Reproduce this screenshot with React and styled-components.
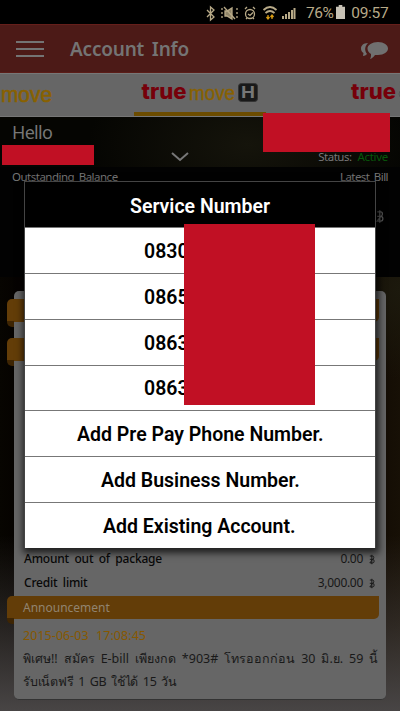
import React from 'react';
import styled, { createGlobalStyle } from 'styled-components';

const Global = createGlobalStyle`
  * { box-sizing: border-box; }
  body { margin: 0; background: #050403; }
`;
const Screen = styled.div`
  position: relative;
  width: 400px;
  height: 711px;
  overflow: hidden;
  display: flex;
  flex-direction: column;
  font-family: 'Noto Sans', 'Open Sans', sans-serif;
  background:
    linear-gradient(to bottom, transparent 535px, rgba(76,71,70,.45) 625px, #484545 711px),
    radial-gradient(ellipse 70px 90px at 400px 290px, #1c190d, transparent),
    linear-gradient(to right, #070501 0, #050200 18px, #130c04 380px, #171006 400px);
`;
const Label = styled.span`
  display: block;
  white-space: nowrap;
  font-family: ${p => p.$font || "'Noto Sans', 'Open Sans', sans-serif"};
  font-size: ${p => p.$size || 12}px;
  line-height: ${p => p.$line || 16}px;
  font-weight: ${p => p.$weight || 400};
  color: ${p => p.$color || '#777'};
  letter-spacing: ${p => p.$track || 0}px;
  word-spacing: ${p => p.$words || 0}px;
`;
const StatusBar = styled.div`
  height: 24px;
  flex: none;
  background: #000;
  display: flex;
  align-items: center;
  padding: 2px 0 0 204px;
`;
const StatusIcons = styled.svg`
  display: block;
  width: 102px;
  height: 22px;
  margin-top: -2px;
`;
const BatteryIcon = styled.svg`
  width: 9px;
  height: 14px;
  margin: -2px 6px 0 3px;
`;
const Header = styled.header`
  height: 49px;
  flex: none;
  display: flex;
  align-items: center;
  background: #4c1a17;
  border-top: 1px solid #651f1b;
  border-bottom: 1px solid #5b1d18;
  padding: 0 11px 0 16px;
`;
const Menu = styled.div`
  width: 28px;
  height: 16px;
  display: flex;
  flex-direction: column;
  justify-content: space-between;
  margin-right: 26px;
`;
const MenuLine = styled.div`
  height: 2px;
  background: #747474;
`;
const ChatIcon = styled.svg`
  width: 29px;
  height: 20px;
  margin: 5px 0 0 auto;
`;
const Tabs = styled.nav`
  height: 44px;
  flex: none;
  display: grid;
  grid-template-columns: 134px 132px 134px;
  background: #666;
  border-top: 1px solid #777;
  border-bottom: 1px solid #777;
`;
const Tab = styled.div`
  display: flex;
  align-items: center;
  justify-content: ${p => p.$end ? 'flex-end' : 'flex-start'};
  overflow: hidden;
  padding-left: ${p => p.$pad || 0}px;
  border-bottom: 4px solid ${p => p.$active ? '#6c4c00' : 'transparent'};
`;
const Brand = styled.svg`
  display: block;
  width: ${p => p.$w}px;
  height: 30px;
  flex: none;
`;
const Profile = styled.section`
  height: 50px;
  flex: none;
  display: flex;
  justify-content: space-between;
  padding: 4px 12px 0;
  background: radial-gradient(ellipse 160px 90px at 62% 55%, #15140b, #050502);
`;
const Balance = styled.section`
  height: 110px;
  flex: none;
  padding: 2px 12px 0;
  background: #020202;
`;
const SplitRow = styled.div`
  display: flex;
  justify-content: space-between;
  align-items: flex-start;
`;
const Amount = styled.div`
  display: flex;
  justify-content: flex-end;
  padding: 25px 4px 0 0;
`;
const StatusLine = styled.div`
  display: flex;
  gap: 6px;
  padding-top: 28px;
`;
const Card = styled.main`
  width: 372px;
  height: 409px;
  margin: 14px 0 0 14px;
  flex: none;
  display: flex;
  flex-direction: column;
  background: #666;
  border-radius: 5px;
  border-bottom: 1px solid #333;
`;
const Ribbon = styled.div`
  position: relative;
  flex: none;
  height: 23px;
  width: 372px;
  margin: ${p => p.$top}px 0 0 -7px;
  padding-left: 16px;
  background: #633d08;
  border-radius: 5px 0 5px 0;
  &::after {
    content: '';
    position: absolute;
    left: 0;
    top: 22px;
    width: 7px;
    height: 6px;
    background: #3e2503;
    border-radius: 0 0 0 5px;
  }
`;
const Usage = styled.div`
  height: 235px;
  flex: none;
  display: flex;
  flex-direction: column;
  justify-content: flex-end;
  padding: 0 11px 5px 10px;
  gap: 8px;
`;
const Notice = styled.div`
  padding: 6px 10px 0 9px;
`;
const Dialog = styled.div`
  position: absolute;
  left: 24px;
  top: 181px;
  width: 352px;
  height: 367px;
  display: grid;
  grid-template-rows: 45px repeat(7, 1fr);
  background: #fff;
  border: 1px solid #444;
  border-bottom: 0;
  box-shadow: 1px 3px 7px 2px rgba(0,0,0,.7);
`;
const DialogTitle = styled.div`
  display: flex;
  align-items: center;
  justify-content: center;
  background: #000;
  padding-top: 5px;
`;
const Option = styled.div`
  display: flex;
  align-items: center;
  padding: 3px 0 0 ${p => p.$left}px;
  border-top: 1px solid #777;
`;
const Redaction = styled.div`
  position: absolute;
  left: ${p => p.$x}px;
  top: ${p => p.$y}px;
  width: ${p => p.$w}px;
  height: ${p => p.$h}px;
  background: #c11024;
`;
const Chevron = styled.svg`
  width: 18px;
  height: 10px;
  margin: 31px 0 0 auto;
`;
const Greeting = styled.div`
  display: flex;
  width: 177px;
`;
const Value = styled.div`
  display: flex;
  align-items: center;
  gap: 6px;
`;
const BahtIcon = styled.svg`
  display: block;
  width: ${p => p.$w}px;
  height: ${p => p.$h}px;
`;
const Baht = ({ color = '#171717', w = 6, h = 11 }) => (
  <BahtIcon $w={w} $h={h} viewBox="0 0 7 11" fill="none" stroke={color} strokeWidth="1.1">
    <path d="M1 1.500h3.200q1.400 0 1.400 1.800T4 5.300H1m3.200 0q1.800 0 1.800 2.100T4.200 9.500H1zM3.300 0v11" />
  </BahtIcon>
);
const roboto = 'Roboto, sans-serif';

const options = [
  ['0830', 119], ['0865', 119], ['0863', 119], ['0863', 119],
  ['Add Pre Pay Phone Number.', 52], ['Add Business Number.', 76], ['Add Existing Account.', 78],
];
const usage = [['Amount out of package', '0.00'], ['Credit limit', '3,000.00']];

const TrueText = ({ x }) => (
  <text x={x} y="21" fontFamily="Inter, sans-serif" fontWeight="800" fontSize="21" fill="#76000a" textLength="45" lengthAdjust="spacingAndGlyphs">true</text>
);

export default function App() {
  return (
    <>
      <Global />
      <Screen>
        <StatusBar>
          <StatusIcons viewBox="204 0 102 22" fill="none" stroke="#b8aa88" strokeWidth="1.3">
            <path d="m207 9 7 7-3.500 3V6l3.500 3-7 7" />
            <path d="M225 10h2l5-3v11l-5-3h-2z" fill="#8f8469" />
            <path d="m224 6 11 12" />
            <path d="M222 7v2m0 2v2m0 2v2m15-10v2m0 2v2m0 2v2" />
            <circle cx="250" cy="13" r="4.500" /><path d="m248 13 2 1.500 3-3M245 8l2-2m8 2-2-2M246 18l1-1m6 0 1 1" />
            <path d="M263.500 9q6.500-6 13 0m-11 3q4.500-4 9 0" strokeWidth="1.800" />
            <path d="M268 14v4m-1.500-2 1.500 2 1.500-2M272 18v-4m-1.500 2 1.500-2 1.500 2" stroke="#d69a13" />
            <path d="M283 18v-3m3 3v-5m3 5v-7m3 7V9m2.500 9V7" strokeWidth="2" />
          </StatusIcons>
          <Label $font={roboto} $size={15.5} $line={20} $color="#b8aa88" $track={-0.5}>76%</Label>
          <BatteryIcon viewBox="0 0 10 15" preserveAspectRatio="none"><path d="M3 0h4v2h3v13H0V2h3z" fill="#c8c2b6" /></BatteryIcon>
          <Label $font={roboto} $size={15.5} $line={20} $color="#b8aa88" $track={-0.3}>09:57</Label>
        </StatusBar>
        <Header>
          <Menu><MenuLine /><MenuLine /><MenuLine /></Menu>
          <Label $size={19} $line={26} $weight={600} $color="#747474" $words={3} $track={-0.2}>Account Info</Label>
          <ChatIcon viewBox="0 0 29 20" fill="#707070"><path d="M18 1c6 0 10 3 10 6.500S24 14 18 14h-3c-1.500 2-3 3.500-5 4 1-1.500 1-3 1-5-2-1-3.500-3-3.500-5.500C7.500 4 12 1 18 1z" /><path d="M8 2C3 2 1 5 1 7.500c0 2 1 3.500 2.500 4.500L3 15c1.500 0 3-1 4-2C4 9 5 5 8 2z" /></ChatIcon>
        </Header>
        <Tabs>
          <Tab><Brand $w={60} viewBox="0 0 60 30"><text x="1" y="24" fontFamily="Liberation Sans, sans-serif" fontSize="22" fill="#896100" stroke="#896100" strokeWidth=".6" textLength="51" lengthAdjust="spacingAndGlyphs">move</text></Brand></Tab>
          <Tab $active $pad={7}>
            <Brand $w={118} viewBox="0 0 118 30">
              <TrueText x="0.500" />
              <text x="48" y="21.500" fontFamily="Liberation Sans, sans-serif" fontSize="20" fill="#896100" stroke="#896100" strokeWidth=".4" textLength="46" lengthAdjust="spacingAndGlyphs">move</text>
              <rect x="97.500" y="5.500" width="19" height="18" rx="3" fill="#191919" stroke="#333" />
              <text x="100" y="20" fontFamily="Liberation Sans, sans-serif" fontWeight="700" fontSize="16" fill="#777" textLength="14" lengthAdjust="spacingAndGlyphs">H</text>
            </Brand>
          </Tab>
          <Tab $end><Brand $w={50} viewBox="0 0 50 30"><TrueText x="1" /><circle cx="53" cy="16" r="4" stroke="#555" fill="none" /></Brand></Tab>
        </Tabs>
        <Profile>
          <Greeting>
            <Label $size={18} $line={22} $track={-0.7}>Hello</Label>
            <Chevron viewBox="0 0 18 10" fill="none" stroke="#777" strokeWidth="2"><path d="m1 1 8 7 8-7" /></Chevron>
          </Greeting>
          <StatusLine><Label $size={11.5} $track={-0.5}>Status:</Label><Label $size={11.5} $track={-0.3} $color="#07570a">Active</Label></StatusLine>
        </Profile>
        <Balance>
          <SplitRow><Label $size={11.5} $words={2} $track={-0.5}>Outstanding Balance</Label><Label $size={11.5} $words={2} $track={-0.55}>Latest Bill</Label></SplitRow>
          <Amount><Baht color="#555" w={8} h={13} /></Amount>
        </Balance>
        <Card>
          <Ribbon $top={8} /><Ribbon $top={16} />
          <Usage>
            {usage.map(([name, value]) => (
              <SplitRow key={name}>
                <Label $size={12} $weight={500} $color="#080808" $words={2.5} $track={-0.2}>{name}</Label>
                <Value><Label $size={12} $color="#171717" $track={-0.3}>{value}</Label><Baht /></Value>
              </SplitRow>
            ))}
          </Usage>
          <Ribbon $top={0}><Label $size={12} $line={23} $color="#918470">Announcement</Label></Ribbon>
          <Notice>
            <Label $size={12.5} $line={22} $color="#875800" $words={4} $track={0.05}>2015-06-03 17:08:45</Label>
            <Label $size={12.5} $line={23} $color="#191919" $words={2.7}>พิเศษ!! สมัคร E-bill เพียงกด *903# โทรออกก่อน 30 มิ.ย. 59 นี้</Label>
            <Label $size={12.5} $line={23} $color="#191919" $words={1.5} $track={-0.2}>รับเน็ตฟรี 1 GB ใช้ได้ 15 วัน</Label>
          </Notice>
        </Card>
        <Redaction $x={2} $y={145} $w={92} $h={20} />
        <Redaction $x={263} $y={113} $w={127} $h={39} />
        <Dialog>
          <DialogTitle><Label $font={roboto} $size={19.5} $line={24} $weight={600} $color="#fff">Service Number</Label></DialogTitle>
          {options.map(([text, left], i) => (
            <Option key={i} $left={left}><Label $font={roboto} $size={19.5} $line={24} $weight={600} $color="#000">{text}</Label></Option>
          ))}
        </Dialog>
        <Redaction $x={184} $y={224} $w={131} $h={181} />
      </Screen>
    </>
  );
}
